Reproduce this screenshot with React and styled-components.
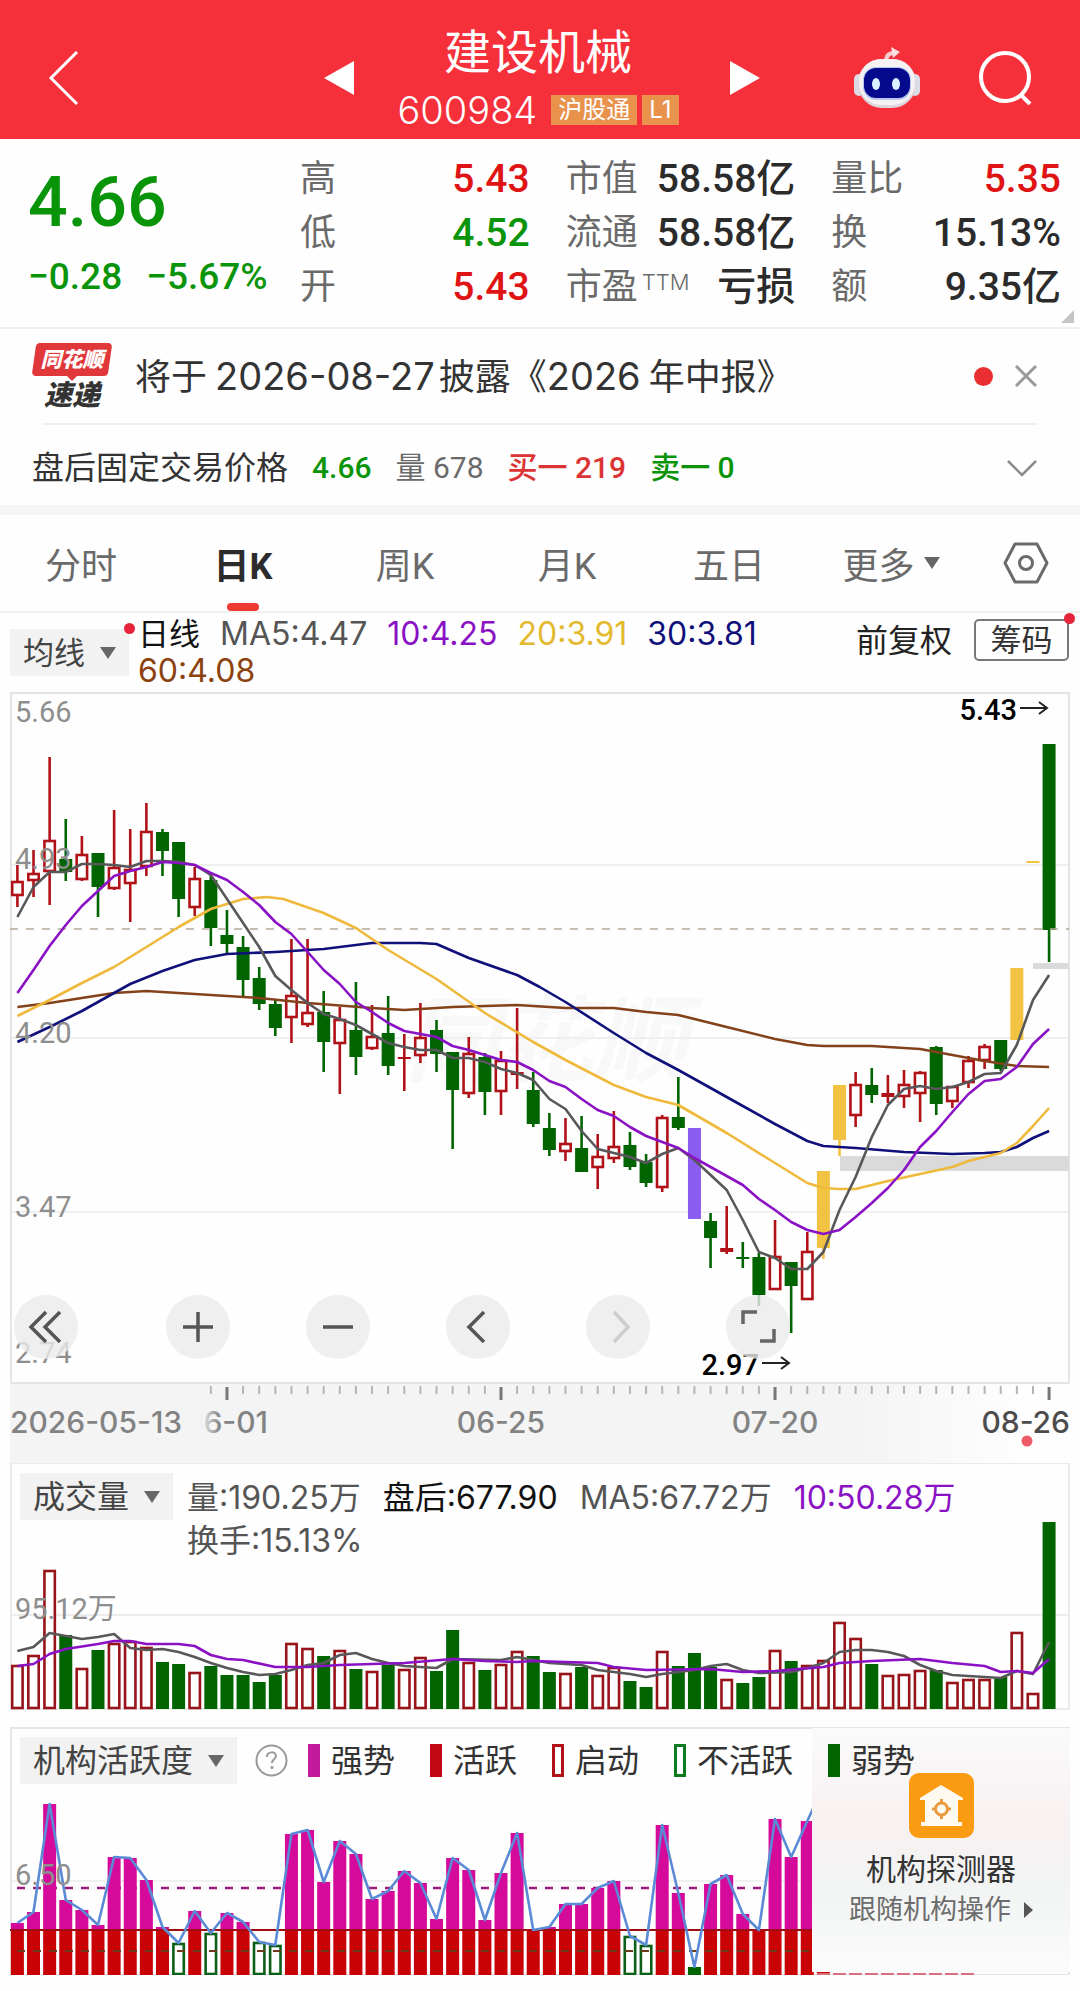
import React from 'react';
import styled, { createGlobalStyle } from 'styled-components';

const RED = '#b01218';
const GREEN = '#006400';
const GOLD = '#f2c343';
const VIOLET = '#8a5cf0';

const PITCH = 16.12;
const FIRST_X = 17.4;
const BAR = 13;
const VOLUME_BASE = 1709;
const ACTIVITY_BASE = 1974;
const ACTIVITY_LIMIT = 1929;

const xAt = i => FIRST_X + (i * PITCH);

// [high, body top, body bottom, low, kind]
// kinds: r = hollow rise, f = flat rise, g = fall, y = limit up, v = marked fall
const candles = [
  [865, 881, 896, 907, 'r'], [850, 873, 881, 897, 'r'], [757, 840, 872, 905, 'r'],
  [819, 859, 872, 881, 'g'], [836, 854, 880, 881, 'r'], [853, 853, 887, 917, 'g'],
  [810, 867, 889, 890, 'r'], [829, 869, 884, 922, 'r'], [803, 831, 867, 876, 'r'],
  [829, 832, 851, 876, 'g'], [842, 842, 899, 917, 'g'], [867, 878, 908, 916, 'r'],
  [875, 880, 928, 946, 'g'], [910, 935, 944, 954, 'g'], [936, 947, 980, 996, 'g'],
  [967, 978, 1004, 1010, 'g'], [999, 1004, 1028, 1036, 'g'], [939, 995, 1018, 1043, 'r'],
  [939, 1012, 1025, 1027, 'r'], [991, 1012, 1042, 1072, 'g'], [1007, 1019, 1044, 1094, 'r'],
  [982, 1030, 1057, 1075, 'g'], [1005, 1036, 1049, 1050, 'r'], [996, 1033, 1066, 1075, 'g'],
  [1034, 1057, 1059, 1091, 'f'], [1003, 1037, 1056, 1063, 'r'], [1020, 1030, 1054, 1072, 'g'],
  [1052, 1052, 1090, 1149, 'g'], [1037, 1053, 1094, 1098, 'r'], [1053, 1057, 1092, 1115, 'g'],
  [1051, 1060, 1092, 1115, 'r'], [1008, 1072, 1075, 1089, 'f'], [1072, 1090, 1124, 1127, 'g'],
  [1113, 1128, 1150, 1156, 'g'], [1118, 1143, 1152, 1161, 'r'], [1116, 1148, 1172, 1172, 'g'],
  [1134, 1156, 1168, 1189, 'r'], [1111, 1146, 1159, 1163, 'r'], [1132, 1145, 1167, 1170, 'g'],
  [1154, 1162, 1183, 1187, 'g'], [1115, 1117, 1188, 1192, 'r'], [1077, 1117, 1128, 1130, 'g'],
  [1128, 1128, 1219, 1219, 'v'], [1213, 1221, 1238, 1268, 'g'], [1206, 1248, 1252, 1254, 'f'],
  [1242, 1257, 1259, 1268, 'g'], [1253, 1257, 1295, 1306, 'g'], [1220, 1256, 1290, 1290, 'r'],
  [1262, 1262, 1286, 1333, 'g'], [1232, 1251, 1300, 1300, 'r'], [1171, 1171, 1248, 1259, 'y'],
  [1085, 1085, 1140, 1156, 'y'], [1072, 1084, 1116, 1127, 'r'], [1068, 1085, 1095, 1103, 'g'],
  [1075, 1093, 1097, 1103, 'f'], [1070, 1084, 1097, 1108, 'r'], [1071, 1072, 1094, 1122, 'r'],
  [1046, 1047, 1104, 1115, 'g'], [1086, 1086, 1102, 1108, 'r'], [1056, 1060, 1083, 1088, 'r'],
  [1044, 1046, 1061, 1069, 'r'], [1040, 1040, 1069, 1071, 'g'], [968, 968, 1040, 1040, 'y'],
  [861, 861, 863, 863, 'y'], [744, 744, 930, 962, 'g'],
];

const volumes = [
  1665, 1655, 1570, 1635, 1668, 1650, 1643, 1641, 1647, 1662, 1664, 1672, 1666,
  1675, 1675, 1682, 1675, 1643, 1648, 1656, 1650, 1669, 1671, 1665, 1669, 1657,
  1671, 1630, 1662, 1670, 1664, 1651, 1656, 1672, 1673, 1667, 1675, 1667, 1681,
  1687, 1651, 1666, 1653, 1667, 1679, 1683, 1677, 1650, 1661, 1665, 1660, 1622,
  1638, 1664, 1675, 1674, 1670, 1670, 1682, 1679, 1679, 1677, 1632, 1693, 1522,
];

const activity = [
  1922, 1911, 1803, 1899, 1909, 1924, 1856, 1857, 1879, 1926, 1942, 1910, 1932,
  1912, 1921, 1941, 1944, 1833, 1829, 1881, 1840, 1853, 1898, 1890, 1870, 1882,
  1918, 1857, 1869, 1919, 1872, 1832, 1929, 1926, 1903, 1903, 1887, 1880, 1935,
  1944, 1824, 1892, 1966, 1883, 1874, 1913, 1929, 1818, 1856, 1820, 1785,
];

const ma5 = [
  917, 887, 872, 872, 864, 864, 865, 867, 861, 861, 862, 865, 875, 899, 923, 947,
  976, 990, 1003, 1014, 1019, 1025, 1034, 1043, 1047, 1050, 1050, 1058, 1058,
  1062, 1069, 1073, 1080, 1099, 1109, 1131, 1149, 1153, 1157, 1163, 1154, 1148,
  1160, 1175, 1190, 1220, 1252, 1258, 1269, 1269, 1252, 1210, 1177, 1137, 1105,
  1089, 1086, 1089, 1087, 1082, 1074, 1073, 1045, 1000, 975,
].map((y, i) => [i, y]);

const ma10 = [
  993, 970, 946, 925, 906, 891, 876, 871, 867, 862, 863, 865, 873, 880, 892, 905,
  922, 934, 952, 970, 984, 1002, 1012, 1023, 1031, 1034, 1037, 1046, 1050, 1055,
  1060, 1062, 1070, 1081, 1087, 1099, 1110, 1116, 1127, 1136, 1142, 1148, 1158,
  1167, 1176, 1185, 1199, 1210, 1222, 1230, 1234, 1230, 1217, 1203, 1188, 1170,
  1147, 1131, 1112, 1094, 1081, 1079, 1067, 1044, 1029,
].map((y, i) => [i, y]);

const ma20 = [
  [0, 1016], [2, 1000], [4, 983], [6, 967], [8, 947], [10, 927], [12, 909], [14, 899],
  [15.5, 897], [16.5, 899], [19, 913], [21, 928], [23, 950], [26, 979], [29, 1013],
  [32, 1042], [34, 1060], [37, 1085], [39, 1097], [41, 1105], [44, 1133], [47, 1163],
  [49, 1183], [50, 1188], [51, 1189], [52, 1189], [54, 1181], [56, 1174], [58, 1167],
  [59, 1161], [60, 1157], [61, 1153], [62, 1143], [63, 1126], [64, 1108],
];

const ma30 = [
  [0, 1042], [2, 1027], [4, 1011], [7, 984], [9, 971], [11, 960], [13, 954], [16, 952],
  [19, 949], [22, 943], [25, 943], [26, 944], [28, 958], [31, 975], [32.4, 987],
  [34, 1002], [37, 1033], [39, 1053], [41, 1070], [43, 1088], [45, 1106], [47, 1124],
  [49, 1141], [50, 1146], [52, 1148], [55, 1152], [58, 1154], [60, 1153], [61, 1152],
  [62, 1147], [63, 1138], [64, 1131],
];

const ma60 = [
  [0, 1007], [2, 1003], [6, 993], [8, 991], [12, 995], [15, 998], [18, 1003], [22, 1008],
  [24, 1010], [27, 1007], [31, 1005], [34, 1008], [37, 1008], [39, 1012], [41, 1015],
  [44, 1027], [47, 1039], [49, 1045], [50, 1046], [53, 1046], [56, 1049], [57, 1052],
  [60, 1061], [62, 1066], [64, 1067],
];

const volMa5 = [
  [0, 1651], [1, 1647], [2, 1633], [3, 1636], [4, 1639], [5, 1637], [6, 1634], [7, 1648],
  [8, 1650], [9, 1649], [10, 1652], [11, 1657], [12, 1663], [13, 1668], [14, 1672],
  [15, 1675], [16, 1674], [17, 1670], [18, 1665], [19, 1663], [20, 1655], [21, 1653],
  [22, 1659], [23, 1663], [24, 1666], [25, 1667], [26, 1668], [27, 1659], [30, 1660],
  [31, 1657], [32, 1660], [33, 1663], [35, 1665], [36, 1670], [38, 1674], [39, 1677],
  [40, 1674], [42, 1670], [43, 1666], [44, 1664], [45, 1670], [46, 1673], [48, 1672],
  [49, 1668], [50, 1663], [51, 1652], [52, 1650], [53, 1650], [54, 1652], [55, 1656],
  [56, 1665], [57, 1671], [58, 1675], [61, 1678], [62, 1671], [63, 1674], [64, 1642],
];

const volMa10 = [
  [0, 1666], [1, 1664], [2, 1654], [3, 1649], [5, 1644], [6, 1641], [7, 1641], [8, 1644],
  [10, 1644], [11, 1646], [12, 1655], [13, 1659], [14, 1660], [16, 1667], [18, 1667],
  [20, 1665], [24, 1663], [27, 1659], [29, 1661], [31, 1662], [32, 1661], [36, 1663],
  [37, 1667], [39, 1670], [43, 1669], [45, 1672], [47, 1671], [50, 1667], [51, 1663],
  [53, 1661], [56, 1659], [58, 1663], [60, 1666], [61, 1672], [62, 1671], [63, 1673],
  [64, 1659],
];

const GlobalStyle = createGlobalStyle`
  *,
  *::before,
  *::after {
    box-sizing: border-box;
  }
  body {
    margin: 0;
    background: #fefefe;
    color: #333;
    font-family: Inter, "Noto Sans CJK SC", sans-serif;
  }
  button {
    margin: 0;
    padding: 0;
    border: 0;
    background: none;
    color: inherit;
    font: inherit;
  }
  svg {
    display: block;
  }
`;

const Page = styled.main`
  padding-bottom: 17px;
`;

const Header = styled.header`
  display: flex;
  align-items: center;
  justify-content: space-between;
  height: 139px;
  padding: 17px 48px 0 48px;
  background: #f5303b;
  color: #fff;
`;

const HeaderSide = styled.div`
  display: flex;
  flex: 1;
  align-items: center;
  justify-content: ${props => (props.$end ? 'flex-end' : 'flex-start')};
  gap: 57px;
`;

const Switcher = styled.div`
  display: flex;
  align-items: center;
  justify-content: space-between;
  width: 436px;
  margin-left: 4px;
`;

const Stock = styled.div`
  display: flex;
  flex-direction: column;
  align-items: center;
  gap: 8px;
  padding: 0 8px 4px 0;
`;

const StockName = styled.h1`
  margin: 0;
  font-size: 47px;
  font-weight: 400;
  line-height: 60px;
`;

const StockCode = styled.div`
  display: flex;
  align-items: center;
  font-size: 38px;
  font-weight: 300;
  line-height: 40px;
`;

const Tag = styled.span`
  margin-left: ${props => (props.$first ? '14px' : '5px')};
  padding: 0 7px;
  background: #e8924c;
  font-size: 24px;
  font-weight: 400;
  line-height: 30px;
`;

const Quote = styled.section`
  position: relative;
  display: grid;
  grid-template-columns: 236px 1fr 1fr 1fr;
  gap: 36px;
  height: 190px;
  padding: 13px 19px 0 28px;
  border-bottom: 2px solid #f0f0f0;
  font-family: Roboto, "Noto Sans CJK SC", sans-serif;
`;

const Price = styled.div`
  color: #0a940a;
  font-weight: 500;
`;

const Last = styled.div`
  font-size: 70px;
  line-height: 100px;
`;

const Change = styled.div`
  display: flex;
  gap: 24px;
  font-size: 37px;
  line-height: 50px;
  white-space: nowrap;
`;

const Corner = styled.svg`
  position: absolute;
  right: 6px;
  bottom: 4px;
`;

const Figure = styled.div`
  display: flex;
  align-items: center;
  justify-content: space-between;
  height: 54px;
  line-height: 54px;
  white-space: nowrap;
`;

const FigureLabel = styled.span`
  color: #6a6a6a;
  font-size: 36px;

  sup {
    margin-left: 4px;
    font-family: Inter, sans-serif;
    font-size: 22px;
    font-weight: 300;
    line-height: 1;
    vertical-align: 9px;
  }
`;

const FigureValue = styled.span`
  color: ${props => props.$color || '#2b2b2b'};
  font-size: 39px;
  font-weight: 500;
`;

const News = styled.section`
  display: flex;
  align-items: center;
  height: 96px;
  margin: 0 43px;
  border-bottom: 2px solid #f0f0f0;
`;

const NewsBadge = styled.div`
  display: flex;
  flex-direction: column;
  align-items: center;
  gap: 4px;
  width: 78px;
  margin: 0 24px 0 -10px;
  font-style: italic;
  font-weight: 900;
`;

const BadgeTop = styled.span`
  position: relative;
  z-index: 0;
  width: 76px;
  color: #fff;
  font-size: 21px;
  line-height: 33px;
  text-align: center;

  &::before {
    content: '';
    position: absolute;
    z-index: -1;
    inset: 0;
    border-radius: 4px;
    background: #e0373a;
    transform: skewX(-8deg);
  }

  &::after {
    content: '';
    position: absolute;
    top: 100%;
    left: 50%;
    margin-left: -5px;
    border: 5px solid transparent;
    border-top-color: #e0373a;
    border-bottom: 0;
  }
`;

const BadgeBottom = styled.span`
  font-size: 28px;
  line-height: 30px;
`;

const NewsText = styled.a`
  flex: 1;
  color: #333;
  font-size: 36px;
  line-height: 50px;
  text-decoration: none;
  white-space: nowrap;
`;

const Digits = styled.span`
  margin: ${props => (props.$inner ? '0 8px 0 0' : '0 4px 0 8px')};
  font-size: 38px;
`;

const NewsDot = styled.span`
  width: 19px;
  height: 19px;
  margin-right: 22px;
  border-radius: 50%;
  background: #ea2f33;
`;

const AfterHours = styled.section`
  display: flex;
  align-items: center;
  height: 80px;
  padding: 6px 43px 0 32px;
  font-family: Roboto, "Noto Sans CJK SC", sans-serif;
  font-size: 30px;
  line-height: 44px;
`;

const AfterTitle = styled.span`
  font-size: 32px;
`;

const AfterItem = styled.span`
  margin-left: 24px;
  color: ${props => props.$color};
  font-weight: ${props => (props.$strong ? 500 : 400)};
`;

const Expand = styled.button`
  margin-left: auto;
`;

const Tabs = styled.nav`
  display: grid;
  grid-template-columns: repeat(6, 3fr) 2fr;
  height: 108px;
  border-top: 10px solid #f5f5f5;
  border-bottom: 2px solid #f0f0f0;
`;

const Tab = styled.button`
  position: relative;
  display: flex;
  align-items: center;
  justify-content: center;
  gap: 9px;
  color: ${props => (props.$active ? '#2b2b2b' : '#6a6a6a')};
  font-family: Roboto, "Noto Sans CJK SC", sans-serif;
  font-size: 36px;
  font-weight: ${props => (props.$active ? 700 : 400)};

  &::after {
    content: '';
    position: absolute;
    bottom: 0;
    left: 50%;
    width: 32px;
    height: 8px;
    margin-left: -16px;
    border-radius: 4px;
    background: ${props => (props.$active ? '#ef3a34' : 'transparent')};
  }
`;

const Averages = styled.section`
  display: flex;
  height: 79px;
  padding: 0 11px 0 10px;
`;

const Picker = styled.button`
  display: flex;
  flex-shrink: 0;
  align-items: center;
  height: 47px;
  padding: 0 13px;
  gap: 15px;
  background: #f2f2f2;
  color: #444;
  font-size: ${props => (props.$large ? '32px' : '31px')};
  line-height: 47px;
  white-space: nowrap;
`;

const WithDot = styled.div`
  position: relative;
  flex-shrink: 0;
  margin-top: ${props => props.$top};

  &::after {
    content: '';
    position: absolute;
    top: -6px;
    right: -6px;
    width: 11px;
    height: 11px;
    border-radius: 50%;
    background: #e5243a;
  }
`;

const Legend = styled.div`
  display: flex;
  flex: 1;
  flex-wrap: wrap;
  align-content: flex-start;
  column-gap: 20px;
  font-size: 32px;
  white-space: nowrap;
`;

const AverageLegend = styled(Legend)`
  padding: 2px 70px 0 9px;
  line-height: 37px;
`;

const LegendItem = styled.span`
  color: ${props => props.$color || '#555'};
`;

const LegendTitle = styled(LegendItem)`
  font-size: 31px;
`;

const Adjust = styled.button`
  align-self: flex-start;
  margin: 8px 22px 0 0;
  color: #222;
  font-size: 32px;
  line-height: 40px;
  white-space: nowrap;
`;

const Chips = styled.button`
  width: 95px;
  height: 42px;
  border: 2px solid #777;
  border-radius: 5px;
  font-size: 31px;
  line-height: 38px;
`;

const Panel = styled.section`
  position: relative;
  margin: 0 10px ${props => (props.$spaced ? '17px' : '0')};
`;

const Plot = styled.svg`
  width: 100%;
  height: auto;
`;

const AxisStrip = styled.div`
  margin: 0 10px;
  background: linear-gradient(to right, #f4f4f4 0%, #f4f4f4 80%, #fefefe 96%);
`;

const Controls = styled.div`
  position: absolute;
  bottom: 25px;
  left: 4px;
  display: flex;
  gap: 76px;
`;

const Control = styled.button`
  width: 64px;
  height: 64px;
  border-radius: 50%;
  background: rgba(235, 235, 235, 0.8);

  &:first-child {
    margin-right: 12px;
  }
`;

const PanelHead = styled.div`
  position: absolute;
  top: ${props => props.$top};
  right: 0;
  left: 10px;
  display: flex;
`;

const VolumeLegend = styled(Legend)`
  padding: 3px 50px 0 14px;
  column-gap: 22px;
  line-height: 43px;
`;

const Help = styled.button`
  margin: 0 20px 0 18px;
`;

const Key = styled.span`
  display: flex;
  align-items: center;
  gap: 11px;
  margin-right: 35px;
  color: #333;
  font-size: 32px;
  line-height: 47px;
  white-space: nowrap;

  &::before {
    content: '';
    width: 12px;
    height: 33px;
    border: 3px solid ${props => props.$color};
    background: ${props => (props.$hollow ? '#fff' : props.$color)};
  }
`;

const Promo = styled.a`
  position: absolute;
  top: 1px;
  right: 0;
  bottom: 3px;
  display: flex;
  flex-direction: column;
  align-items: center;
  width: 258px;
  padding-top: 45px;
  background: linear-gradient(to bottom, #fafafa 0%, #f8f0f1 40%, #f1f4f3 66%, #fbfbfb 100%);
  color: #333;
  text-decoration: none;
`;

const PromoTitle = styled.span`
  margin-top: 10px;
  font-size: 30px;
  line-height: 42px;
`;

const PromoNote = styled.span`
  display: flex;
  align-items: center;
  gap: 13px;
  color: #6c6c6c;
  font-size: 27px;
  line-height: 40px;
`;

const Caret = () => (
  <svg width="16" height="12" viewBox="0 0 16 12">
    <path d="M0 0h16L8 12z" fill="#666" />
  </svg>
);

const Robot = () => (
  <svg width="68" height="62" viewBox="0 0 68 62">
    <path d="M33 15c0-6 3-9 8-9" fill="none" stroke="#f9cdd0" strokeWidth="4" />
    <path d="M38 0l9 5-7 6z" fill="#fbdfe2" />
    <rect x="1" y="27" width="10" height="22" rx="5" fill="#dcdce6" />
    <rect x="57" y="27" width="10" height="22" rx="5" fill="#dcdce6" />
    <rect x="5" y="12" width="58" height="49" rx="24" fill="#ddd6dd" />
    <rect x="6" y="12" width="56" height="46" rx="22" fill="#f6f1f3" />
    <rect x="10" y="20" width="48" height="33" rx="13" fill="#b9c6ee" />
    <rect x="11" y="21" width="46" height="30" rx="12" fill="#050a8c" />
    <ellipse cx="23" cy="37" rx="4" ry="6" fill="#d9f2ff" />
    <ellipse cx="43" cy="37" rx="4" ry="6" fill="#d9f2ff" />
  </svg>
);

const Candle = ({ index, data }) => {
  const [high, top, bottom, low, kind] = data;
  const x = xAt(index);
  const color = { r: RED, f: RED, g: GREEN, y: GOLD, v: VIOLET }[kind];
  const hollow = kind === 'r';
  return (
    <g stroke={color}>
      {high < top && <path d={`M${x} ${high}V${top}`} strokeWidth="2.6" />}
      {low > bottom && <path d={`M${x} ${bottom}V${low}`} strokeWidth="2.6" />}
      {hollow ? (
        <rect
          x={x - 5.2}
          y={top + 1}
          width={BAR - 2.6}
          height={Math.max(bottom - top - 2, 1)}
          fill="#fff"
          strokeWidth="2.6"
        />
      ) : (
        <rect x={x - 6.5} y={top} width={BAR} height={bottom - top} fill={color} stroke="none" />
      )}
    </g>
  );
};

const Line = ({ points, color }) => (
  <polyline
    points={points.map(([i, y]) => `${xAt(i).toFixed(1)},${y}`).join(' ')}
    fill="none"
    stroke={color}
    strokeWidth="2.6"
    strokeLinejoin="round"
  />
);

const AxisLabel = ({ y, children }) => (
  <text x="15" y={y} fill="#8e8e8e" fontFamily="Roboto, 'Noto Sans CJK SC', sans-serif" fontSize="29">
    {children}
  </text>
);

const PriceChart = () => (
  <Plot viewBox="10 692 1060 692">
    <rect x="11" y="693" width="1058" height="690" fill="#fefefe" stroke="#e4e4e4" strokeWidth="2" />
    <text x="405" y="1074" fill="#f8f8f8" fontSize="94" fontWeight="700" fontStyle="italic">同花顺</text>
    <path d="M12 865H1068M12 1038H1068M12 1212H1068" stroke="#ececec" strokeWidth="1.5" />
    <rect x="1033" y="963" width="36" height="6" fill="#dadada" />
    <rect x="840" y="1156" width="229" height="15" fill="#dadada" />
    {candles.map((data, i) => <Candle key={xAt(i)} index={i} data={data} />)}
    <path d="M10 929H1069" stroke="#b3a996" strokeWidth="1.5" strokeDasharray="8 8" />
    <Line points={ma60} color="#84421a" />
    <Line points={ma30} color="#10107a" />
    <Line points={ma20} color="#efb93c" />
    <Line points={ma5} color="#58585a" />
    <Line points={ma10} color="#8a12c4" />
    <AxisLabel y="722">5.66</AxisLabel>
    <AxisLabel y="869">4.93</AxisLabel>
    <AxisLabel y="1043">4.20</AxisLabel>
    <AxisLabel y="1217">3.47</AxisLabel>
    <AxisLabel y="1363">2.74</AxisLabel>
    <g fontFamily="Roboto, sans-serif" fontSize="29" fontWeight="500" textAnchor="end">
      <text x="1017" y="720">5.43</text>
      <text x="759" y="1375">2.97</text>
    </g>
    <g fill="none" stroke="#222" strokeWidth="2">
      <path d="M1020 708H1046M1039 702L1047 708L1039 714" />
      <path d="M762 1363H788M781 1357L789 1363L781 1369" />
    </g>
  </Plot>
);

const majors = [13, 30, 47, 64];

const DateAxis = () => (
  <Plot viewBox="10 1384 1060 79">
    <defs>
      <linearGradient id="fade">
        <stop offset="0.6" stopColor="#f4f4f4" />
        <stop offset="1" stopColor="#f4f4f4" stopOpacity="0" />
      </linearGradient>
    </defs>
    {candles.map((_, i) => {
      const major = majors.includes(i);
      return i > 11 && (
        <path
          key={xAt(i)}
          d={`M${xAt(i)} ${major ? 1387 : 1386}V${major ? 1400 : 1394}`}
          stroke={major ? '#777' : '#b4b4b4'}
          strokeWidth={major ? 3 : 2}
        />
      );
    })}
    <g fill="#838383" fontFamily="Inter, sans-serif" fontSize="30" fontWeight="500">
      <text x="226" y="1433" textAnchor="middle">06-01</text>
      <rect x="170" y="1405" width="50" height="34" fill="url(#fade)" />
      <text x="10" y="1433">2026-05-13</text>
      <text x="501" y="1433" textAnchor="middle">06-25</text>
      <text x="775" y="1433" textAnchor="middle">07-20</text>
      <text x="1070" y="1433" textAnchor="end" fill="#4c4c4c">08-26</text>
    </g>
    <circle cx="1027" cy="1441" r="5.5" fill="#ec5d69" />
  </Plot>
);

const VolumeChart = () => (
  <Plot viewBox="10 1463 1060 247">
    <rect x="11" y="1463" width="1058" height="246" fill="#fefefe" stroke="#ebebeb" strokeWidth="2" />
    <path d="M12 1615H1068" stroke="#ececec" strokeWidth="2" />
    {volumes.map((top, i) => {
      const fall = 'gv'.includes(candles[i][4]);
      return (
        <rect
          key={xAt(i)}
          x={xAt(i) - (fall ? 6.5 : 5.2)}
          y={fall ? top : top + 1}
          width={fall ? BAR : BAR - 2.6}
          height={VOLUME_BASE - top - (fall ? 0 : 2)}
          fill={fall ? GREEN : '#fff'}
          stroke={fall ? 'none' : '#98141a'}
          strokeWidth="2.6"
        />
      );
    })}
    <Line points={volMa5} color="#58585a" />
    <Line points={volMa10} color="#8a12c4" />
    <AxisLabel y="1619">95.12万</AxisLabel>
  </Plot>
);

const ActivityBar = ({ index, top }) => {
  const x = xAt(index) - 6.5;
  if (top > 1960) {
    return <rect x={x} y={top} width={BAR} height={ACTIVITY_BASE - top} fill={GREEN} />;
  }
  if (top > 1930) {
    return (
      <rect
        x={x + 1.3}
        y={top + 1}
        width={BAR - 2.6}
        height={ACTIVITY_BASE - top - 2}
        fill="#fff"
        stroke="#0b5f16"
        strokeWidth="2.6"
      />
    );
  }
  return (
    <g>
      <rect x={x} y={top} width={BAR} height={ACTIVITY_LIMIT - top} fill="#d5099a" />
      <rect x={x} y={ACTIVITY_LIMIT} width={BAR} height={ACTIVITY_BASE - ACTIVITY_LIMIT} fill="#c80205" />
    </g>
  );
};

const ActivityChart = () => (
  <Plot viewBox="10 1726 1060 248">
    <rect x="11" y="1727" width="1058" height="247" fill="#fefefe" stroke="#e6e6e6" strokeWidth="2" />
    <path d="M12 1880H1068" stroke="#ececec" strokeWidth="1.5" />
    <path d="M17 1887H812" stroke="#9a1a7a" strokeWidth="2.4" strokeDasharray="8 8" />
    {activity.map((top, i) => <ActivityBar key={xAt(i)} index={i} top={top} />)}
    <path d="M10 1929H812" stroke="#a00c14" strokeWidth="2" />
    <path d="M17 1950H812" stroke="#6b3b1c" strokeWidth="2" strokeDasharray="8 8" />
    <Line points={activity.map((y, i) => [i, y])} color="#5b8bd6" />
    <AxisLabel y="1884">6.50</AxisLabel>
    <path d="M817 1973H976" stroke="#d8707c" strokeWidth="2" strokeDasharray="13 3" />
  </Plot>
);

const figures = [
  [['高', '5.43', '#e01414'], ['低', '4.52', '#0a940a'], ['开', '5.43', '#e01414']],
  [['市值', '58.58亿'], ['流通', '58.58亿'], ['市盈', '亏损', null, 'TTM']],
  [['量比', '5.35', '#e01414'], ['换', '15.13%'], ['额', '9.35亿']],
];

const controls = [
  ['最早', 'M32 17L17 32l15 15M46 17L31 32l15 15', '#555'],
  ['放大', 'M17 32h30M32 17v30', '#555'],
  ['缩小', 'M17 32h30', '#555'],
  ['前移', 'M38 17L23 32l15 15', '#555'],
  ['后移', 'M28 17l14 15-14 15', '#cdcdcd'],
  ['全屏', 'M17 29V17h14M34 46h14V34', '#666'],
];

const App = () => (
  <Page>
    <GlobalStyle />
    <Header>
      <HeaderSide>
        <button type="button" aria-label="返回">
          <svg width="32" height="54" viewBox="0 0 32 54">
            <path d="M29 1L3 27l26 26" fill="none" stroke="#fff" strokeWidth="3" />
          </svg>
        </button>
      </HeaderSide>
      <Switcher>
        <button type="button" aria-label="上一只">
          <svg width="30" height="34" viewBox="0 0 30 34"><path d="M30 0v34L0 17z" fill="#fff" /></svg>
        </button>
        <Stock>
          <StockName>建设机械</StockName>
          <StockCode>
            600984
            <Tag $first>沪股通</Tag>
            <Tag>L1</Tag>
          </StockCode>
        </Stock>
        <button type="button" aria-label="下一只">
          <svg width="30" height="34" viewBox="0 0 30 34"><path d="M0 0v34l30-17z" fill="#fff" /></svg>
        </button>
      </Switcher>
      <HeaderSide $end>
        <button type="button" aria-label="智能助手"><Robot /></button>
        <button type="button" aria-label="搜索">
          <svg width="54" height="54" viewBox="0 0 54 54" fill="none" stroke="#fff" strokeWidth="4">
            <circle cx="27" cy="26" r="24" />
            <path d="M42 43l10 10" />
          </svg>
        </button>
      </HeaderSide>
    </Header>

    <Quote>
      <Price>
        <Last>4.66</Last>
        <Change>
          <span>−0.28</span>
          <span>−5.67%</span>
        </Change>
      </Price>
      {figures.map(column => (
        <div key={column[0][0]}>
          {column.map(([label, value, color, sup]) => (
            <Figure key={label}>
              <FigureLabel>
                {label}
                {sup && <sup>{sup}</sup>}
              </FigureLabel>
              <FigureValue $color={color}>{value}</FigureValue>
            </Figure>
          ))}
        </div>
      ))}
      <Corner width="13" height="13" viewBox="0 0 13 13"><path d="M13 0v13H0z" fill="#c4c4c4" /></Corner>
    </Quote>

    <News>
      <NewsBadge>
        <BadgeTop>同花顺</BadgeTop>
        <BadgeBottom>速递</BadgeBottom>
      </NewsBadge>
      <NewsText href="#report">
        将于<Digits>2026-08-27</Digits>披露《<Digits $inner>2026</Digits>年中报》
      </NewsText>
      <NewsDot />
      <button type="button" aria-label="关闭">
        <svg width="22" height="22" viewBox="0 0 22 22">
          <path d="M1 1l20 20M21 1L1 21" stroke="#999" strokeWidth="3" />
        </svg>
      </button>
    </News>

    <AfterHours>
      <AfterTitle>盘后固定交易价格</AfterTitle>
      <AfterItem $color="#0a940a" $strong>4.66</AfterItem>
      <AfterItem $color="#6a6a6a">量 678</AfterItem>
      <AfterItem $color="#dc3434" $strong>买一 219</AfterItem>
      <AfterItem $color="#0a940a" $strong>卖一 0</AfterItem>
      <Expand type="button" aria-label="展开">
        <svg width="30" height="17" viewBox="0 0 30 17">
          <path d="M1 1l14 14L29 1" fill="none" stroke="#8c8c8c" strokeWidth="2.5" />
        </svg>
      </Expand>
    </AfterHours>

    <Tabs>
      <Tab type="button">分时</Tab>
      <Tab type="button" $active>日K</Tab>
      <Tab type="button">周K</Tab>
      <Tab type="button">月K</Tab>
      <Tab type="button">五日</Tab>
      <Tab type="button">更多<Caret /></Tab>
      <Tab type="button" aria-label="设置">
        <svg width="46" height="42" viewBox="0 0 46 42" fill="none" stroke="#6a6a6a" strokeWidth="3">
          <path d="M12 2h22l10 19-10 19H12L2 21z" strokeLinejoin="round" />
          <circle cx="23" cy="21" r="6.5" />
        </svg>
      </Tab>
    </Tabs>

    <Averages>
      <WithDot $top="16px">
        <Picker type="button">均线<Caret /></Picker>
      </WithDot>
      <AverageLegend>
        <LegendTitle $color="#111">日线</LegendTitle>
        <LegendItem>MA5:4.47</LegendItem>
        <LegendItem $color="#8a12c4">10:4.25</LegendItem>
        <LegendItem $color="#e3b92f">20:3.91</LegendItem>
        <LegendItem $color="#10107a">30:3.81</LegendItem>
        <LegendItem $color="#8c420f">60:4.08</LegendItem>
      </AverageLegend>
      <Adjust type="button">前复权</Adjust>
      <WithDot $top="6px">
        <Chips type="button">筹码</Chips>
      </WithDot>
    </Averages>

    <Panel>
      <PriceChart />
      <Controls>
        {controls.map(([label, path, color]) => (
          <Control key={label} type="button" aria-label={label}>
            <svg width="64" height="64" viewBox="0 0 64 64">
              <path d={path} fill="none" stroke={color} strokeWidth="3.5" />
            </svg>
          </Control>
        ))}
      </Controls>
    </Panel>

    <AxisStrip>
      <DateAxis />
    </AxisStrip>

    <Panel $spaced>
      <VolumeChart />
      <PanelHead $top="10px">
        <Picker type="button" $large>成交量<Caret /></Picker>
        <VolumeLegend>
          <LegendItem>量:190.25万</LegendItem>
          <LegendItem $color="#111">盘后:677.90</LegendItem>
          <LegendItem>MA5:67.72万</LegendItem>
          <LegendItem $color="#8a12c4">10:50.28万</LegendItem>
          <LegendItem>换手:15.13%</LegendItem>
        </VolumeLegend>
      </PanelHead>
    </Panel>

    <Panel>
      <ActivityChart />
      <Promo href="#detector">
        <svg width="65" height="65" viewBox="0 0 65 65">
          <rect width="65" height="65" rx="10" fill="#fb9b12" />
          <path d="M32 12l22 13v2h-5v22h4v4H12v-4h4V27h-5v-2z" fill="#fffaf0" />
          <circle cx="32.500" cy="36" r="6" fill="none" stroke="#e79a3e" strokeWidth="3" />
          <path d="M32.500 26v5M32.500 41v5M23 36h4M38 36h4" stroke="#e79a3e" strokeWidth="3" />
        </svg>
        <PromoTitle>机构探测器</PromoTitle>
        <PromoNote>
          跟随机构操作
          <svg width="9" height="16" viewBox="0 0 9 16"><path d="M0 0v16l9-8z" fill="#555" /></svg>
        </PromoNote>
      </Promo>
      <PanelHead $top="10px">
        <Picker type="button" $large>机构活跃度<Caret /></Picker>
        <Help type="button" aria-label="说明">
          <svg width="33" height="33" viewBox="0 0 33 33">
            <circle cx="16.500" cy="16.500" r="15" fill="none" stroke="#999" strokeWidth="2" />
            <path d="M12 13c0-6 9-6 9-1 0 3-4 3-4 7" fill="none" stroke="#999" strokeWidth="2" />
            <circle cx="17" cy="23.500" r="1.600" fill="#999" />
          </svg>
        </Help>
        <Key $color="#c41a9c">强势</Key>
        <Key $color="#c20812">活跃</Key>
        <Key $color="#b01218" $hollow>启动</Key>
        <Key $color="#0b7a20" $hollow>不活跃</Key>
        <Key $color="#006400">弱势</Key>
      </PanelHead>
    </Panel>
  </Page>
);

export default App;
